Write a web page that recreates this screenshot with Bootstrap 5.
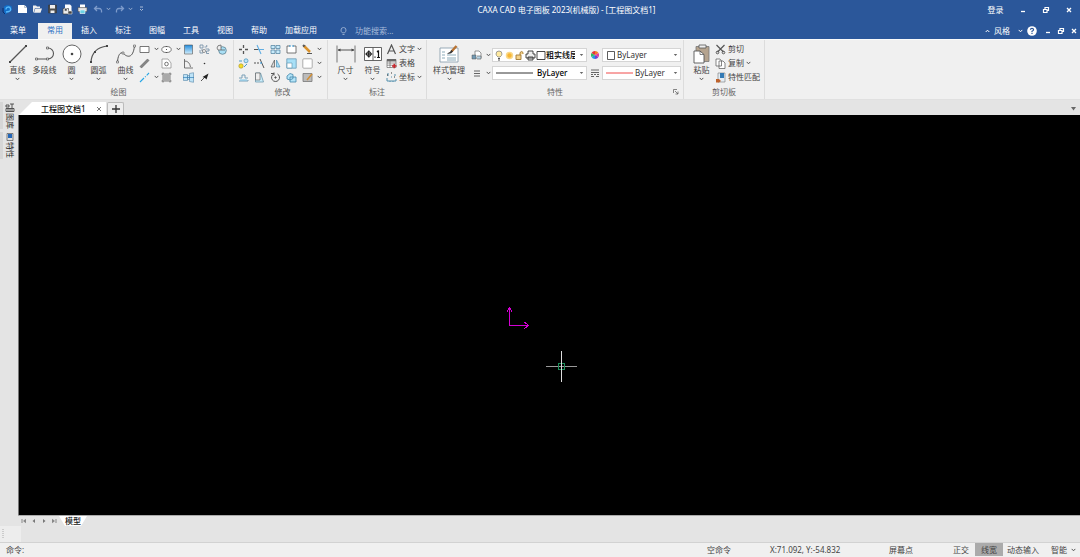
<!DOCTYPE html>
<html lang="zh-CN">
<head>
<meta charset="utf-8">
<meta name="viewport" content="width=device-width, initial-scale=1">
<title>CAXA CAD 电子图板 2023(机械版)</title>
<link href="https://cdn.jsdelivr.net/npm/bootstrap@5.3.0/dist/css/bootstrap.min.css" rel="stylesheet">
<script src="https://cdn.jsdelivr.net/npm/bootstrap@5.3.0/dist/js/bootstrap.bundle.min.js"></script>
<style>
  body { font: 8px/12px "Noto Sans", "Noto Sans CJK SC", sans-serif; color: #444; background: #e4e4e4; overflow: hidden; }
  svg { display: block; flex: none; fill: none; stroke: #555; }
  button, select { font: inherit; color: inherit; background: none; border: 0; padding: 0; }
  button { display: flex; align-items: center; justify-content: center; white-space: nowrap; }
  .header { background: #2b579a; color: #fff; }
  .header svg { stroke: #fff; }
  .titlebar { height: 23px; padding-bottom: 3px; }
  .quick { padding-bottom: 2px; }
  .quick button { width: 15px; height: 12px; }
  .quick .narrow { width: 7px; }
  .doc-title { left: 0; right: 0; padding-left: 53px; pointer-events: none; }
  .win button { width: 23px; }
  .menubar { height: 16px; }
  .menubar a { color: #fff; text-decoration: none; padding: 1px 9px 3px; }
  .menubar a:first-child { padding-left: 10px; padding-right: 12px; }
  .menubar a.active { background: #f0f0f0; color: #2b6fc4; }
  .search { color: #a9bddb; margin-left: 14px; }
  .search input { width: 60px; background: none; border: 0; padding: 0; font: inherit; color: inherit; }
  .search input::placeholder { color: #a9bddb; opacity: 1; }
  .mdi button { width: 13px; }
  .ribbon { height: 61px; background: #f0f0f0; border-top: 1px solid #fafafa; border-bottom: 1px solid #e0e0e0; }
  .group { border-right: 1px solid #dcdcdc; padding: 2px 0 1px 4px; }
  .group-name { color: #666; text-align: center; }
  .tools { height: 44px; }
  .large { flex-direction: column; justify-content: flex-start; width: 27px; height: 44px; padding-top: 2px; }
  .large .chev { margin-top: 1px; }
  .wide { width: 36px; }
  .rows { display: grid; grid-template-rows: repeat(3, 14px); align-items: center; }
  .draw-grid { grid-template-columns: 22px 22px 16px 17px 17px; }
  .edit-grid { grid-template-columns: repeat(4, 16px) 25px; }
  .rows button { height: 14px; justify-content: flex-start; gap: 2px; }
  .draw-grid button, .edit-grid button { gap: 4px; }
  .combos { padding: 6px 0 0 4px; margin-right: -2px; }
  .combos button { gap: 4px; padding-right: 1px; }
  .combo { height: 14px; background: #fff; border: 1px solid #d5d5d5; padding: 0 2px; }
  .combo select { appearance: none; min-width: 0; height: 12px; line-height: 12px; color: #333; overflow: hidden; }
  .combo .strong-text { color: #000; font-weight: 500; }
  .combo-a { width: 95px; }
  .combo-b { width: 79px; }
  .between { margin: 0 3px 0 4px; }
  .rail { width: 18px; padding-top: 2px; }
  .rail button { flex-direction: column; gap: 1px; width: 17px; height: 27px; margin-bottom: 3px; border-left: 3px solid #d6d6d6; color: #222; }
  .rail span { writing-mode: vertical-rl; text-orientation: sideways; line-height: 9px; }
  .doc-tabs { height: 15px; padding-top: 2px; }
  .doc-tab { width: 87px; height: 13px; margin-left: 1px; padding: 0 4px 0 22px; background: #fff; clip-path: polygon(0 100%, 13px 0, 100% 0, 100% 100%); color: #111; font-weight: 500; }
  .add-tab { width: 17px; height: 13px; background: #eee; border: 1px solid #bbb; border-bottom: 0; border-radius: 2px 2px 0 0; margin-left: 1px; }
  .drawing { background: #000; border-left: 1px solid #777; min-height: 100px; }
  .drawing svg { shape-rendering: crispEdges; }
  .ucs { left: 46%; top: 47.5%; }
  .crosshair { left: 49.7%; top: 59%; }
  .sheets { height: 11px; border-top: 1px solid #aaa; padding-left: 1px; }
  .sheets .step { width: 10px; height: 10px; }
  .sheet-tab { width: 28px; height: 10px; background: #fff; clip-path: polygon(0 0, 100% 0, 22px 100%, 6px 100%); color: #111; font-weight: 500; line-height: 10px; }
  .command { height: 16px; }
  .grip { width: 21px; height: 16px; background: #ededed; padding: 3px 2px; }
  .status { height: 15px; background: #f0f0f0; border-top: 1px solid #d2d2d2; padding: 0 0 1px 6px; }
  .status .on { background: #ababab; height: 13px; width: 28px; margin-left: 2px; }
  .cmd-state { width: 63px; }
  .coords { width: 119px; }
  .snap { width: 60px; }
</style>
</head>
<body class="vh-100 d-flex flex-column">
<svg width="0" height="0" class="position-absolute" aria-hidden="true">
  <symbol id="chev" viewBox="0 0 5 4"><path d="M.7.9 2.5 2.8 4.3.9"/></symbol>
  <symbol id="tri" viewBox="0 0 5 4"><path d="M.8 1h3.4L2.500 3z" fill="#666" stroke="none"/></symbol>
  <symbol id="min" viewBox="0 0 8 8"><path d="M2 5.500h4" stroke-width="1.300"/></symbol>
  <symbol id="restore" viewBox="0 0 8 8"><path d="M1.500 3.500h3.500v3H1.500zM3 3V1.500h3.500v3H5" stroke-width="1.200"/></symbol>
  <symbol id="close" viewBox="0 0 8 8"><path d="m2 2 4 4M6 2 2 6" stroke-width="1.300"/></symbol>
</svg>

<header class="header">
  <div class="titlebar d-flex align-items-center position-relative">
    <div class="quick d-flex">
      <button aria-label="CAXA"><svg width="11" height="11" viewBox="0 0 11 11" stroke="none"><path d="M2 2.500 5 1l4.500 1L10 6 7 8l-4 2.500-1-4z" fill="#126ec8" stroke="none"/><path d="M4 5.500a2.300 2.300 0 1 1 3 2L4 8" stroke="#58b8fa" stroke-width="1.300"/><path d="M1 4v4l2 2" stroke="#092f70" /></svg></button>
      <button aria-label="新建"><svg width="11" height="10" viewBox="0 0 11 10"><path d="M1 1h6.500L10 3.500V9H1z" fill="#fff" stroke="none"/><path d="M7.500 1v2.500H10" stroke="#9ab" stroke-width=".7"/></svg></button>
      <button aria-label="打开"><svg width="11" height="10" viewBox="0 0 11 10"><path d="M1 1.500h3l1 1h3V4H3L1.500 8.500H1zM3.300 4.500H10L8.500 8.700H2z" fill="#eee" stroke="none"/></svg></button>
      <button aria-label="保存"><svg width="11" height="10" viewBox="0 0 11 10"><path d="M1.500 1h8v8h-8z" fill="#4b4b4b" stroke="#333" stroke-width=".5"/><path d="M3 1h5v3.500H3zM3.500 6.500h4V9h-4z" fill="#eee" stroke="none"/></svg></button>
      <button aria-label="另存为"><svg width="11" height="11" viewBox="0 0 11 11"><path d="M3 .5h5L9.500 2v6H3z" fill="#fff" stroke="none"/><path d="M1 4.500h5.500v5.500H1z" fill="#eee" stroke="#444" stroke-width=".7"/><path d="M2.500 4.500h2.500V7H2.500zM6 7h4v3H6z" fill="#444" stroke="#ddd" stroke-width=".6"/></svg></button>
      <button aria-label="打印"><svg width="11" height="10" viewBox="0 0 11 10"><path d="M3 .5h5V4H3z" fill="#fff" stroke="none"/><path d="M1 3.500h9V7.500H1z" fill="#ddd" stroke="#555" stroke-width=".6"/><path d="M3 6h5v3.500H3z" fill="#6ad2e4" stroke="#fff" stroke-width=".6"/></svg></button>
      <button aria-label="撤销"><svg width="10" height="9" viewBox="0 0 10 9"><path d="M4 1 1.500 3.500 4 6M1.500 3.500H6Q9 3.500 8.500 7.500" style="stroke:#7d9bcb" stroke-width="1.300"/></svg></button>
      <button class="narrow" aria-label="撤销列表"><svg width="5" height="4" opacity=".5"><use href="#chev"/></svg></button>
      <button aria-label="重做"><svg width="10" height="9" viewBox="0 0 10 9"><path d="M6 1 8.500 3.500 6 6M8.500 3.500H4Q1 3.500 1.500 7.500" style="stroke:#7d9bcb" stroke-width="1.300"/></svg></button>
      <button class="narrow" aria-label="重做列表"><svg width="5" height="4" opacity=".5"><use href="#chev"/></svg></button>
      <button aria-label="自定义"><svg width="5" height="6" viewBox="0 0 5 6" opacity=".6"><path d="M1 1h3M1 3l1.500 1.500L4 3"/></svg></button>
    </div>
    <div class="doc-title position-absolute text-center">CAXA CAD 电子图板 2023(机械版) - [工程图文档1]</div>
    <div class="win d-flex ms-auto">
      <button>登录</button>
      <span class="ps-1"></span>
      <button aria-label="最小化"><svg width="8" height="8"><use href="#min"/></svg></button>
      <button aria-label="还原"><svg width="8" height="8"><use href="#restore"/></svg></button>
      <button aria-label="关闭"><svg width="8" height="8"><use href="#close"/></svg></button>
    </div>
  </div>
  <nav class="menubar d-flex align-items-stretch">
    <a href="#">菜单</a><a href="#" class="active">常用</a><a href="#">插入</a><a href="#">标注</a><a href="#">图幅</a><a href="#">工具</a><a href="#">视图</a><a href="#">帮助</a><a href="#">加载应用</a>
    <label class="search d-flex align-items-center gap-2"><svg width="7" height="9" viewBox="0 0 7 9"><path d="M2.300 5.800Q.8 4.500 1 3a2.500 2.500 0 0 1 5 0Q6 4.500 4.700 5.800zM2.500 7.500h2" style="stroke:#a9bddb" stroke-width=".8"/></svg><input type="text" placeholder="功能搜索..." aria-label="功能搜索"></label>
    <div class="mdi d-flex ms-auto">
      <button aria-label="收起功能区"><svg width="5" height="4" viewBox="0 0 5 4"><path d="M.7 3 2.500 1.200 4.300 3"/></svg></button>
      <button class="w-auto gap-2">风格<svg width="5" height="4"><use href="#chev"/></svg></button>
      <button class="w-auto px-1" aria-label="帮助"><svg width="10" height="10" viewBox="0 0 10 10"><circle cx="5" cy="5" r="4.800" fill="#fff" stroke="none"/><path d="M3.400 3.800Q3.500 2.300 5 2.300T6.600 3.800Q6.600 4.600 5 5.300V6.200M5 7v1" style="stroke:#2b579a" stroke-width="1.200"/></svg></button>
      <button aria-label="最小化文档"><svg width="8" height="8"><use href="#min"/></svg></button>
      <button aria-label="还原文档"><svg width="8" height="8"><use href="#restore"/></svg></button>
      <button aria-label="关闭文档"><svg width="8" height="8"><use href="#close"/></svg></button>
    </div>
  </nav>
</header>

<section class="ribbon d-flex">
  <div class="group">
    <div class="tools d-flex">
      <button class="large"><svg width="20" height="20" viewBox="0 0 20 20"><path d="M2 18 18 2" stroke-width="1.200"/><path d="M1 17h2v2H1zM17 1h2v2h-2z" fill="#444" stroke="none"/></svg><span>直线</span><svg class="chev" width="5" height="4"><use href="#chev"/></svg></button>
      <button class="large"><svg width="20" height="20" viewBox="0 0 20 20"><path d="M1.500 15H13a5.500 5.500 0 0 0 0-11" stroke-width="1.100"/><path d="M.5 14h2v2h-2zM11.500 14h2v2h-2zM11.500 3h2v2h-2z" fill="#eee" stroke-width=".7"/></svg><span>多段线</span><svg class="chev" width="5" height="4" visibility="hidden"><use href="#chev"/></svg></button>
      <button class="large"><svg width="20" height="20" viewBox="0 0 20 20"><circle cx="10" cy="10" r="9" fill="#fff" stroke-width=".9"/><circle cx="10" cy="10" r="1.300" fill="#444" stroke="none"/></svg><span>圆</span><svg class="chev" width="5" height="4"><use href="#chev"/></svg></button>
      <button class="large"><svg width="20" height="20" viewBox="0 0 20 20"><path d="M2 18Q3 4 18 2" stroke-width="1.200"/><path d="M1 17h2v2H1zM17 1h2v2h-2zM5 7h2v2H5z" fill="#444" stroke="none"/></svg><span>圆弧</span><svg class="chev" width="5" height="4"><use href="#chev"/></svg></button>
      <button class="large"><svg width="20" height="20" viewBox="0 0 20 20"><path d="M1.500 18C2 10 5 7 8 10S17 15 18.500 2" stroke-width="1"/><path d="M.5 17h2v2h-2zM17.500 1h2v2h-2zM6 8h2v2H6z" fill="#eee" stroke-width=".6"/></svg><span>曲线</span><svg class="chev" width="5" height="4"><use href="#chev"/></svg></button>
      <div class="rows draw-grid">
        <button aria-label="矩形"><svg width="11" height="11" viewBox="0 0 11 11"><path d="M1 2.500h9v6H1z" fill="#fff" stroke-width=".8"/></svg><svg width="5" height="4"><use href="#chev"/></svg></button>
        <button aria-label="椭圆"><svg width="11" height="11" viewBox="0 0 11 11"><ellipse cx="5.500" cy="5.500" rx="4.700" ry="3" fill="#fff" stroke-width=".8"/><path d="M5 5.500h1M5.500 2v1M5.500 8v1"/></svg><svg width="5" height="4"><use href="#chev"/></svg></button>
        <button aria-label="渐变填充"><svg width="11" height="11" viewBox="0 0 11 11"><defs><linearGradient id="fill" x2="0" y2="1"><stop stop-color="#208bdc"/><stop offset="1" stop-color="#d5effc"/></linearGradient></defs><path d="M1.500 1h8v9h-8z" fill="url(#fill)" stroke-width=".6"/></svg></button>
        <button aria-label="孔轴"><svg width="11" height="11" viewBox="0 0 11 11"><path d="M1 1h3v3H1zM5.500 3h2a1.500 1.500 0 0 0 0-2M2 6h2v3H1V6M6.500 5H10v2H7.500v2.500H10" stroke="#7892a8" stroke-width=".9"/><circle cx="5" cy="7" r="1.500" fill="#fff" stroke-width=".6"/></svg></button>
        <button aria-label="局部放大"><svg width="11" height="11" viewBox="0 0 11 11"><circle cx="6.500" cy="6.500" r="3.800" fill="#a9dff5" stroke="#5d8292" stroke-width=".8"/><path d="M1 4q0-3 4-3v5H2zM5 6h4" fill="#eee" stroke-width=".7"/></svg></button>
        <button aria-label="平行线"><svg width="11" height="11" viewBox="0 0 11 11"><path d="m1.500 9.500 8-8" stroke="#888" stroke-width="2.400"/><path d="m1 8.500 7.500-7.500M2.500 10 10 2.500" stroke="#555" stroke-width=".5"/></svg></button>
        <button aria-label="多边形"><svg width="11" height="11" viewBox="0 0 11 11"><path d="M1 1h6l3 4v5H1z" fill="#fff" stroke="#888" stroke-width=".7"/><circle cx="5.500" cy="6" r="1.800" stroke-width=".8"/></svg></button>
        <button aria-label="公式曲线"><svg width="11" height="11" viewBox="0 0 11 11"><path d="M1.500 1v9H10M1.500 3q5 0 6 6" stroke-width=".8"/></svg></button>
        <button aria-label="点"><svg width="11" height="11" viewBox="0 0 11 11"><circle cx="5.500" cy="5.500" r=".8" fill="#333" stroke="none"/></svg></button>
        <span></span>
        <button aria-label="中心线"><svg width="11" height="11" viewBox="0 0 11 11"><path d="m1 10 4-4m1-1 .7-.7m1-1L10 1" stroke="#27a6e5" stroke-width="1.100"/></svg><svg width="5" height="4"><use href="#chev"/></svg></button>
        <button aria-label="剖面线"><svg width="11" height="11" viewBox="0 0 11 11"><path d="M2 .5v10M9 .5v10M.5 2h10M.5 9h10" stroke-width=".7"/><path d="M2 2h7v7H2z" fill="#aaa" stroke="none"/></svg></button>
        <button aria-label="对称图形"><svg width="11" height="11" viewBox="0 0 11 11"><path d="M.5 2.500h4v6h-4zM4.500 3.500h2v4h-2zM6.500 1.500l4-.8v9.600l-4-.8z" fill="#bde3f7" stroke="#5587aa" stroke-width=".6"/><path d="M0 5.500h11" stroke="#347fb7" stroke-width=".7"/></svg></button>
        <button aria-label="箭头"><svg width="11" height="11" viewBox="0 0 11 11"><path d="m2 9 4-4"/><path d="m9.500 1.500-2 6-1.500-1.500L3.500 5z" fill="#222" stroke="none"/></svg></button>
      </div>
    </div>
    <div class="group-name">绘图</div>
  </div>

  <div class="group">
    <div class="tools rows edit-grid">
      <button aria-label="平移"><svg width="11" height="11" viewBox="0 0 11 11"><path d="M5.500 1v3M5.500 7v3M1 5.500h3M7 5.500h3" stroke-width="1.300"/></svg></button>
      <button aria-label="裁剪"><svg width="11" height="11" viewBox="0 0 11 11"><path d="M1 5.500h9M3 1l4 9" stroke="#62aee2" stroke-width="1.100"/><path d="M0 5.500h4"/></svg></button>
      <button aria-label="阵列"><svg width="11" height="11" viewBox="0 0 11 11"><path d="M1 1.500h4v3H1zM6 1.500h4v3H6zM1 6h4v3.500H1zM6 6h4v3.500H6z" fill="#c7eafa" stroke="#4a7d9b" stroke-width=".7"/></svg></button>
      <button aria-label="打断"><svg width="11" height="11" viewBox="0 0 11 11"><path d="M4 2H1v7h9V2H7" fill="#fff" stroke-width=".8"/><path d="M4 1v2M7 1v2" stroke="#3699d5"/></svg></button>
      <button aria-label="编辑"><svg width="11" height="11" viewBox="0 0 11 11"><path d="m2 2 6 6" stroke="#d9922c" stroke-width="2.500"/><path d="m1 1 2 .5L1.500 3zM5 9.500h5" fill="#555"/></svg><svg width="5" height="4"><use href="#chev"/></svg></button>
      <button aria-label="平移复制"><svg width="11" height="11" viewBox="0 0 11 11"><circle cx="3" cy="8" r="2.200" fill="#f5dd28" stroke="#a3902b" stroke-width=".6"/><circle cx="8" cy="2.800" r="2" fill="#bce4f8" stroke="#3f8eb9" stroke-width=".7"/><path d="m6 9 3-3M1 3h3" stroke="#4a9bc9"/></svg></button>
      <button aria-label="延伸"><svg width="11" height="11" viewBox="0 0 11 11"><path d="M0 5h2M3 5h2M6 1l4 9" stroke-width="1"/><path d="M6 5h2" stroke="#2b95dc"/></svg></button>
      <button aria-label="镜像"><svg width="11" height="11" viewBox="0 0 11 11"><path d="M4.500 2v7H1z" fill="#ddd" stroke-width=".7"/><path d="M6.500 2v7H10z" fill="#a8dcf5" stroke="#4790b7" stroke-width=".7"/></svg></button>
      <button aria-label="缩放"><svg width="11" height="11" viewBox="0 0 11 11"><path d="M.8.8h9.400v9.400H.8z" fill="#a8e0f7" stroke="#699bb5" stroke-width=".8"/><path d="M1 5h5v5H1z" fill="#fff" stroke="#699bb5" stroke-width=".7"/></svg></button>
      <button aria-label="圆角"><svg width="11" height="11" viewBox="0 0 11 11"><rect x=".8" y=".8" width="9.400" height="9.400" rx="1" fill="#fff" stroke="#999" stroke-width=".8"/></svg><svg width="5" height="4"><use href="#chev"/></svg></button>
      <button aria-label="等距线"><svg width="11" height="11" viewBox="0 0 11 11"><path d="M1 6h3V3h3v3h3M1 9h9V8" stroke="#789fb7"/><path d="M2 8h7" stroke="#79c8ed"/></svg></button>
      <button aria-label="拉伸"><svg width="11" height="11" viewBox="0 0 11 11"><path d="M1.500 1h5l3 9h-8z" fill="#c9edfb" stroke="#6e98ac" stroke-width=".8"/><path d="M1.500 1H6v7H1.500z" fill="#eee" stroke-width=".6"/></svg></button>
      <button aria-label="旋转"><svg width="11" height="11" viewBox="0 0 11 11"><path d="M4 1.800A4 4 0 1 0 7.500 2M4 .5v3M4 1.500l-3 0" stroke-width="1"/><circle cx="5.500" cy="5.500" r=".7" fill="#444"/></svg></button>
      <button aria-label="分解"><svg width="11" height="11" viewBox="0 0 11 11"><path d="M1 4 4 1.500l3 1v4L4 8 1 7zM4 5h6v5H4z" fill="#b4e4f8" stroke="#4387a9" stroke-width=".8"/></svg></button>
      <button aria-label="填充编辑"><svg width="11" height="11" viewBox="0 0 11 11"><path d="M1 1.500h9v8H1z" fill="#bbb" stroke="#777" stroke-width=".8"/><path d="m5 8 5-6" stroke="#d28e34" stroke-width="1.500"/></svg><svg width="5" height="4"><use href="#chev"/></svg></button>
    </div>
    <div class="group-name">修改</div>
  </div>

  <div class="group pe-1">
    <div class="tools d-flex">
      <button class="large"><svg width="20" height="20" viewBox="0 0 20 20"><path d="M1 1.500v17M19 1.500v17" stroke="#777"/><path d="M2 6h16"/><path d="m1.500 6 3-1.500v3zM18.500 6l-3-1.500v3z" fill="#444" stroke="none"/></svg><span>尺寸</span><svg class="chev" width="5" height="4"><use href="#chev"/></svg></button>
      <button class="large"><svg width="20" height="20" viewBox="0 0 20 20"><path d="M1.500 3.500h17v13h-17zM10 3.500v13" fill="#fff" stroke-width=".9"/><circle cx="5.800" cy="10" r="2.300" stroke="#111" stroke-width="1"/><path d="M2.300 10h7M5.800 6.500v7M15.500 6.500v7M14 8l1.500-1.500M14 13.500h3M12 12.500v1.200" stroke="#111" stroke-width="1.200"/></svg><span>符号</span><svg class="chev" width="5" height="4"><use href="#chev"/></svg></button>
      <div class="rows">
        <button><svg width="11" height="11" viewBox="0 0 11 11"><path d="m1.500 10 4-9 4 9M3 7h5" stroke-width="1.200"/></svg>文字<svg width="5" height="4"><use href="#chev"/></svg></button>
        <button><svg width="11" height="11" viewBox="0 0 11 11"><path d="M1 1.500h9v8H1zM1 5h9M1 7.200h9M4 3v6.500" fill="#fff" stroke-width=".6"/><path d="M1 1h9v2.500H1z" fill="#666" stroke="none"/><path d="M6 8h4.500M8.200 5.800v4.500" stroke="#c8252b" stroke-width="1.500"/></svg>表格</button>
        <button><svg width="11" height="11" viewBox="0 0 11 11"><path d="M2 1v3M1 6v3h9V7M5 5h1M9 2v2M4 9v1M7 9v1" stroke="#5590ad"/><path d="M5 1h1M8 5h1M1 3h1" stroke="#333"/></svg>坐标<svg width="5" height="4"><use href="#chev"/></svg></button>
      </div>
    </div>
    <div class="group-name">标注</div>
  </div>

  <div class="group pe-1 position-relative">
    <div class="tools d-flex">
      <button class="large wide"><svg width="20" height="20" viewBox="0 0 20 20"><path d="M1 4h18v14H1z" fill="#fff" stroke="#8298a7" stroke-width=".8"/><path d="M3 8h3M3 11h3M3 14h3M8 11h9M8 14h9M8 16h9" stroke="#8dacba"/><path d="m17.500 2-5 5.500" stroke="#b77334" stroke-width="2.500"/><path d="M12.500 6 14 7.500Q12 10.500 8 9.500 11 9 12.500 6" fill="#333" stroke="none"/></svg><span>样式管理</span><svg class="chev" width="5" height="4"><use href="#chev"/></svg></button>
      <div class="combos d-flex flex-column">
        <div class="d-flex align-items-center mb-1">
          <button aria-label="图层"><svg width="11" height="11" viewBox="0 0 11 11"><path d="M4 1h4l2 2v5H4z" fill="#fff" stroke-width=".6"/><path d="M1 5h4v4H1z" fill="#7199b3" stroke-width=".5"/><path d="M6 6h4v3H6" fill="#b8d5e6" stroke-width=".6"/></svg><svg width="5" height="4"><use href="#chev"/></svg></button>
          <div class="combo combo-a d-flex align-items-center">
            <svg width="51" height="11" viewBox="0 0 51 11"><path d="M3 7Q1 5.500 1 4a3 3 0 0 1 6 0q0 1.500-2 3z" fill="#ffeaa0" stroke="#888" stroke-width=".8"/><path d="M3 8.500h2M3 10h2"/><circle cx="14.500" cy="5.500" r="3" fill="#f7b635" stroke="#fad98b" stroke-width="1.500"/><path d="M21 5h5v4.500h-5zM25 5V2.500q2-2 3 0V4" fill="#f4d28b" stroke="#a27832" stroke-width=".9"/><path d="M33 4V1h5v3h2v4h-9V4zM33 7h5v3h-5z" fill="#eee" stroke="#333" stroke-width=".9"/><path d="M42 1.500h8v8h-8z" fill="#fff" stroke="#333" stroke-width=".9"/></svg>
            <select class="flex-fill strong-text" aria-label="当前图层"><option>粗实线层</option></select><svg class="ms-1" width="5" height="4"><use href="#tri"/></svg>
          </div>
          <svg class="between" width="8" height="8" viewBox="0 0 8 8" stroke-width="0"><path d="M4 4V0a4 4 0 0 1 3.500 2z" fill="#f37c26"/><path d="M4 4 7.500 2a4 4 0 0 1 0 4z" fill="#e43c9c"/><path d="M4 4 7.500 6A4 4 0 0 1 4 8z" fill="#7240d0"/><path d="M4 4v4A4 4 0 0 1 .5 6z" fill="#2495e5"/><path d="M4 4 .5 6a4 4 0 0 1 0-4z" fill="#2fba64"/><path d="M4 4 .5 2A4 4 0 0 1 4 0z" fill="#e5343b"/></svg>
          <div class="combo combo-b d-flex align-items-center"><svg width="12" height="11" viewBox="0 0 12 11"><path d="M2.500 1.500h7v8h-7z" fill="#fff" stroke="#333" stroke-width=".8"/></svg><select class="flex-fill" aria-label="颜色"><option>ByLayer</option></select><svg width="5" height="4"><use href="#tri"/></svg></div>
        </div>
        <div class="d-flex align-items-center">
          <button aria-label="线宽"><svg width="11" height="11" viewBox="0 0 11 11"><path d="M3 3h6M3 5.500h6M3 8h6" stroke-width=".9"/></svg><svg width="5" height="4"><use href="#chev"/></svg></button>
          <div class="combo combo-a d-flex align-items-center"><svg width="38" height="4"><path d="M1 2h37" stroke="#333" stroke-width="1"/></svg><select class="flex-fill ms-1 strong-text" aria-label="线型"><option>ByLayer</option></select><svg width="5" height="4"><use href="#tri"/></svg></div>
          <svg class="between" width="8" height="8" viewBox="0 0 8 8"><path d="M0 1h8M0 3.500h8M0 5.500h2m1 0h2m1 0h2M0 7.500h3m2 0h3" stroke-width=".9"/></svg>
          <div class="combo combo-b d-flex align-items-center"><svg width="30" height="4"><path d="M1 2h27" stroke="#f04b4b"/></svg><select class="flex-fill" aria-label="线宽值"><option>ByLayer</option></select><svg width="5" height="4"><use href="#tri"/></svg></div>
        </div>
      </div>
    </div>
    <div class="group-name">特性</div>
    <button class="position-absolute bottom-0 end-0 p-1" aria-label="特性设置"><svg width="6" height="6" viewBox="0 0 6 6"><path d="M.5 4V.5H4M2 2l3 3M5 2.500V5H2.500" stroke-width=".7"/></svg></button>
  </div>

  <div class="group pe-1">
    <div class="tools d-flex">
      <button class="large"><svg width="20" height="20" viewBox="0 0 20 20"><path d="M4 2.500h13v15H4z" fill="#b5a38e" stroke="#777" stroke-width=".8"/><path d="M7 1h7v3H7z" fill="#eee" stroke-width=".8"/><path d="M2 7h6l4 3.500V19H2z" fill="#fff" stroke-width=".9"/><path d="M8 7v3.500h4" stroke-width=".7"/></svg><span>粘贴</span><svg class="chev" width="5" height="4"><use href="#chev"/></svg></button>
      <div class="rows">
        <button><svg width="11" height="11" viewBox="0 0 11 11"><path d="m1.500 1 7 7M9.500 1l-7 7" stroke-width="1.200"/><circle cx="2.500" cy="8.500" r="1.300"/><circle cx="8.500" cy="8.500" r="1.300"/></svg>剪切</button>
        <button><svg width="11" height="11" viewBox="0 0 11 11"><path d="M1 1h4l1.500 2v5H1zM4 3h4l2 2v5.500H4z" fill="#fff" stroke-width=".7"/></svg>复制<svg width="5" height="4"><use href="#chev"/></svg></button>
        <button><svg width="11" height="11" viewBox="0 0 11 11"><path d="M3 1h7v9H3z" fill="#e4edf4" stroke="#777" stroke-width=".6"/><path d="M5 1h4v5H5z" fill="#347bb5" stroke="none"/><path d="M1 7h3l2 2-2 1.500H1z" fill="#bd622c" stroke="none"/></svg>特性匹配</button>
      </div>
    </div>
    <div class="group-name">剪切板</div>
  </div>
</section>

<main class="d-flex flex-fill">
  <aside class="rail">
    <button><svg width="10" height="9" viewBox="0 0 10 9"><path d="M1 2h3v2H1zM5 1h4M7 1v4M1 5.500h8v3H1zM3 5.500v3M5 5.500v3M7 5.500v3" stroke="#333" stroke-width=".8"/></svg><span>图库</span></button>
    <button><svg width="8" height="8" viewBox="0 0 8 8"><path d="M1 .5h6v7H1z" fill="#ddd" stroke-width=".7"/><path d="M2 1h4v4H2z" fill="#2467b8" stroke="none"/></svg><span>特性</span></button>
  </aside>
  <div class="d-flex flex-column flex-fill">
    <div class="doc-tabs d-flex align-items-end">
      <div class="doc-tab d-flex align-items-center justify-content-between">工程图文档1<button aria-label="关闭文档页"><svg width="6" height="6" viewBox="0 0 6 6"><path d="m1 1 4 4M5 1 1 5" stroke-width=".8"/></svg></button></div>
      <button class="add-tab" aria-label="新建文档"><svg width="8" height="8" viewBox="0 0 8 8"><path d="M4 0v8M0 4h8" stroke="#333" stroke-width="1.300"/></svg></button>
      <button class="ms-auto pb-1 pe-1" aria-label="文档列表"><svg width="5" height="4" viewBox="0 0 5 4"><path d="M0 0h5L2.500 3.500z" fill="#666" stroke="none"/></svg></button>
    </div>
    <div class="drawing flex-fill position-relative overflow-hidden">
      <svg class="ucs position-absolute" width="24" height="24" viewBox="0 0 24 24"><path d="M2.500 2v18.500H22M0 6.500l2.500-4 2.500 4M17.500 17l4 3.500-4 3" stroke="#d400d4"/></svg>
      <svg class="crosshair position-absolute" width="31" height="31" viewBox="0 0 31 31"><path d="M0 15.500h31" stroke="#999"/><path d="M12.500 12.500h6v6h-6z" stroke="#1d8f5b"/><path d="M15.500 0v31" stroke="#ddd"/></svg>
    </div>
    <div class="sheets d-flex">
      <button class="step" aria-label="首页"><svg width="6" height="6" viewBox="0 0 6 6"><path d="M1 1v4" stroke="#888"/><path d="M5 .8v4.400L2 3z" fill="#888" stroke="none"/></svg></button>
      <button class="step" aria-label="上一页"><svg width="6" height="6" viewBox="0 0 6 6"><path d="M4 1v4L1.500 3z" fill="#777" stroke="none"/></svg></button>
      <button class="step" aria-label="下一页"><svg width="6" height="6" viewBox="0 0 6 6"><path d="M2 1v4l2.500-2z" fill="#777" stroke="none"/></svg></button>
      <button class="step" aria-label="末页"><svg width="6" height="6" viewBox="0 0 6 6"><path d="M5 1v4" stroke="#888"/><path d="M1 .8v4.400L4 3z" fill="#888" stroke="none"/></svg></button>
      <button class="sheet-tab">模型</button>
    </div>
  </div>
</main>

<div class="command"><div class="grip"><svg width="2" height="10" viewBox="0 0 2 10"><path d="M1 0v10" stroke="#aaa" stroke-dasharray="1 1"/></svg></div></div>
<footer class="status d-flex align-items-center">
  <span class="me-auto">命令:</span>
  <div class="d-flex align-items-center">
    <span class="cmd-state">空命令</span><span class="coords">X:71.092, Y:-54.832</span><span class="snap">屏幕点</span>
    <button class="px-1">正交</button><button class="on">线宽</button><button class="px-1">动态输入</button><button class="ps-2 gap-1 pe-1">智能<svg width="5" height="4"><use href="#chev"/></svg></button>
  </div>
</footer>
</body>
</html>
